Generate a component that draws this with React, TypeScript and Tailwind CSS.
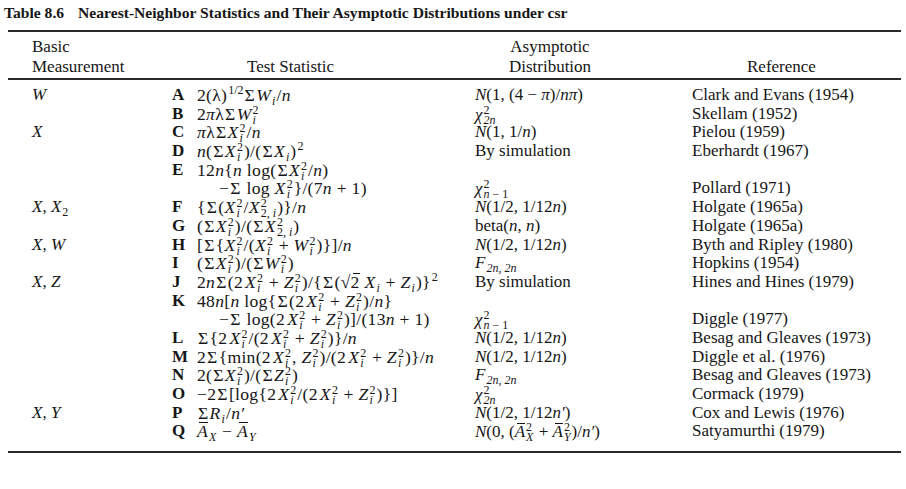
import type { ReactNode } from "react";

// stacked super/subscript, e.g. X with ² over ᵢ
function SS({ sup, sub }: { sup: ReactNode; sub: ReactNode }) {
  return (
    <span className="inline-block align-[-4px] text-[12px] leading-[10px] tracking-normal ml-px mr-px not-italic">
      <span className="block">{sup}</span>
      <span className="block">{sub}</span>
    </span>
  );
}

function Sup({ children }: { children: ReactNode }) {
  return <span className="relative -top-[7px] text-[12px] tracking-normal ml-px">{children}</span>;
}

function Sub({ children }: { children: ReactNode }) {
  return <span className="relative top-[4px] text-[12px] tracking-normal ml-px mr-px">{children}</span>;
}

// letter with a bar over it
function Bar({ children }: { children: ReactNode }) {
  return (
    <span className="relative">
      {children}
      <span className="absolute left-[2px] right-0 top-[1px] h-px bg-[#161616]" />
    </span>
  );
}

// summation sign with a little room on each side
const S = <span className="mx-px">Σ</span>;

const ii = <i>i</i>;
const Xi2 = (
  <>
    <i>X</i>
    <SS sup="2" sub={ii} />
  </>
);
const Zi2 = (
  <>
    <i>Z</i>
    <SS sup="2" sub={ii} />
  </>
);
const Wi2 = (
  <>
    <i>W</i>
    <SS sup="2" sub={ii} />
  </>
);
const X2i2 = (
  <>
    <i>X</i>
    <SS sup="2" sub={<>2, {ii}</>} />
  </>
);
// "2X_i^2" is set with a thin gap after the 2
const TwoX = (
  <>
    2<span className="inline-block w-[2px]" />
    {Xi2}
  </>
);
const n = <i>n</i>;

const Nhalf = (
  <>
    <i>N</i>(1/2, 1/12{n})
  </>
);
const chi2n = (
  <>
    <i>χ</i>
    <SS sup="2" sub={<i>2n</i>} />
  </>
);
const chiN1 = (
  <>
    <i>χ</i>
    <SS sup="2" sub={<><i>n</i> − 1</>} />
  </>
);
const F2n = (
  <>
    <i>F</i>
    <Sub>
      <i>2n, 2n</i>
    </Sub>
  </>
);

interface Row {
  m?: ReactNode;
  l?: string;
  f: ReactNode;
  d?: ReactNode;
  r?: string;
  indent?: boolean;
}

const ROWS: Row[] = [
  {
    m: <i>W</i>,
    l: "A",
    f: (
      <>
        2(λ)<Sup>1/2</Sup>{S}<i>W</i>
        <Sub><i>i</i></Sub>/{n}
      </>
    ),
    d: (
      <>
        <i>N</i>(1, (4 − <i>π</i>)/<i>nπ</i>)
      </>
    ),
    r: "Clark and Evans (1954)",
  },
  { l: "B", f: <>2<i>π</i>λ{S}{Wi2}</>, d: chi2n, r: "Skellam (1952)" },
  {
    m: <i>X</i>,
    l: "C",
    f: <><i>π</i>λ{S}{Xi2}/{n}</>,
    d: <><i>N</i>(1, 1/{n})</>,
    r: "Pielou (1959)",
  },
  {
    l: "D",
    f: (
      <>
        {n}({S}{Xi2})/({S}<i>X</i>
        <Sub><i>i</i></Sub>)<Sup>2</Sup>
      </>
    ),
    d: "By simulation",
    r: "Eberhardt (1967)",
  },
  { l: "E", f: <>12{n}{"{"}{n} log({S}{Xi2}/{n})</> },
  { indent: true, f: <>−{S} log {Xi2}{"}"}/(7{n} + 1)</>, d: chiN1, r: "Pollard (1971)" },
  {
    m: (
      <>
        <i>X</i>, <i>X</i>
        <Sub>2</Sub>
      </>
    ),
    l: "F",
    f: <>{"{"}{S}({Xi2}/{X2i2}){"}"}/{n}</>,
    d: Nhalf,
    r: "Holgate (1965a)",
  },
  { l: "G", f: <>({S}{Xi2})/({S}{X2i2})</>, d: <>beta({n}, {n})</>, r: "Holgate (1965a)" },
  {
    m: <><i>X</i>, <i>W</i></>,
    l: "H",
    f: <>[{S}{"{"}{Xi2}/({Xi2} + {Wi2}){"}"}]/{n}</>,
    d: Nhalf,
    r: "Byth and Ripley (1980)",
  },
  { l: "I", f: <>({S}{Xi2})/({S}{Wi2})</>, d: F2n, r: "Hopkins (1954)" },
  {
    m: <><i>X</i>, <i>Z</i></>,
    l: "J",
    f: (
      <>
        2{n}{S}({TwoX} + {Zi2})/{"{"}{S}(√<Bar>2</Bar> <i>X</i>
        <Sub><i>i</i></Sub> + <i>Z</i>
        <Sub><i>i</i></Sub>){"}"}
        <Sup>2</Sup>
      </>
    ),
    d: "By simulation",
    r: "Hines and Hines (1979)",
  },
  { l: "K", f: <>48{n}[{n} log{"{"}{S}({TwoX} + {Zi2})/{n}{"}"}</> },
  { indent: true, f: <>−{S} log({TwoX} + {Zi2})]/(13{n} + 1)</>, d: chiN1, r: "Diggle (1977)" },
  { l: "L", f: <>{S}{"{"}{TwoX}/({TwoX} + {Zi2}){"}"}/{n}</>, d: Nhalf, r: "Besag and Gleaves (1973)" },
  {
    l: "M",
    f: <>2{S}{"{"}min({TwoX}, {Zi2})/({TwoX} + {Zi2}){"}"}/{n}</>,
    d: Nhalf,
    r: "Diggle et al. (1976)",
  },
  { l: "N", f: <>2({S}{Xi2})/({S}{Zi2})</>, d: F2n, r: "Besag and Gleaves (1973)" },
  { l: "O", f: <>−2{S}[log{"{"}{TwoX}/({TwoX} + {Zi2}){"}"}]</>, d: chi2n, r: "Cormack (1979)" },
  {
    m: <><i>X</i>, <i>Y</i></>,
    l: "P",
    f: (
      <>
        {S}<i>R</i>
        <Sub><i>i</i></Sub>/<i>n′</i>
      </>
    ),
    d: <><i>N</i>(1/2, 1/12<i>n′</i>)</>,
    r: "Cox and Lewis (1976)",
  },
  {
    l: "Q",
    f: (
      <>
        <Bar><i>A</i></Bar>
        <Sub><i>X</i></Sub> − <Bar><i>A</i></Bar>
        <Sub><i>Y</i></Sub>
      </>
    ),
    d: (
      <>
        <i>N</i>(0, (<Bar><i>A</i></Bar>
        <SS sup="2" sub={<i>X</i>} /> + <Bar><i>A</i></Bar>
        <SS sup="2" sub={<i>Y</i>} />)/<i>n′</i>)
      </>
    ),
    r: "Satyamurthi (1979)",
  },
];

export default function App() {
  return (
    <div className="w-[906px] h-[489px] bg-white text-[#161616] font-['Liberation_Serif',serif] overflow-hidden">
      {/* Caption */}
      <div className="h-[30px] pt-[3px] pl-[4px] text-[15.6px] font-bold leading-[20px] whitespace-nowrap">
        Table 8.6<span className="inline-block w-[14px]" />Nearest-Neighbor Statistics and Their Asymptotic Distributions under csr
      </div>

      <div className="ml-[8px] w-[893px]">
        <div className="h-[2px] bg-[#2a2a2a]" />

        {/* Column heads */}
        <div className="flex h-[46px] pt-[5px] text-[17px] leading-[20px] whitespace-nowrap">
          <div className="w-[164px] pl-[24px]">
            <div>Basic</div>
            <div>Measurement</div>
          </div>
          <div className="w-[283px] flex flex-col justify-end pb-[1px] pl-[75px]">Test Statistic</div>
          <div className="w-[190px] text-center">
            <div>Asymptotic</div>
            <div>Distribution</div>
          </div>
          <div className="flex-1 flex flex-col justify-end pb-[1px] pl-[102px]">Reference</div>
        </div>

        <div className="h-[2px] bg-[#2a2a2a]" />

        {/* Body */}
        <div className="pt-[6px] text-[17px] whitespace-nowrap">
          {ROWS.map((row, idx) => (
            <div key={idx} className="flex h-[18.7px] leading-[18.7px]">
              <div className="w-[164px] pl-[24px]">{row.m}</div>
              <div className="w-[25px] font-bold">{row.l}</div>
              <div className={`w-[278px] text-[17.6px] tracking-[0.3px] ${row.indent ? "pl-[22px]" : ""}`}>{row.f}</div>
              <div className="w-[217px]">{row.d}</div>
              <div className="flex-1">{row.r}</div>
            </div>
          ))}
        </div>

        <div className="mt-[10px] h-[2px] bg-[#2a2a2a]" />
      </div>
    </div>
  );
}
